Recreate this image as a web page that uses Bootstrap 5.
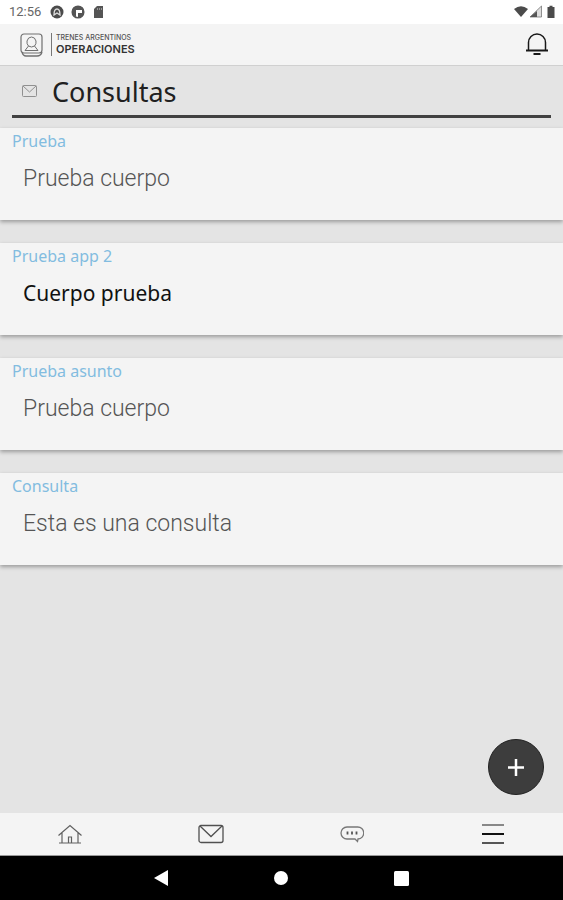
<!DOCTYPE html>
<html lang="es">
<head>
<meta charset="utf-8">
<meta name="viewport" content="width=device-width, initial-scale=1">
<title>Consultas</title>
<link href="https://cdn.jsdelivr.net/npm/bootstrap@5.3.0/dist/css/bootstrap.min.css" rel="stylesheet">
<style>
body { background: #e4e4e4; font-family: "Noto Sans", sans-serif; color: #1c1c1c; }
svg { display: block; }
.status-bar { height: 24px; padding: 0 7px 0 9px; background: #fff; color: #666; font: 13px/24px Roboto, sans-serif; }
.app-bar { height: 42px; padding: 0 12px 0 20px; background: #f4f4f4; border-bottom: 1px solid #d0d0d0; }
.brand { color: #333; gap: 7px; }
.brand-text { border-left: 1px solid #777; padding-left: 4px; font-family: Inter, sans-serif; font-weight: 600; }
.brand-top { font-size: 7px; line-height: 9px; font-weight: 500; color: #555; }
.brand-main { font-size: 11px; line-height: 14px; }
.page-title { margin: 0 12px 10px; padding-left: 10px; gap: 15px; height: 52px; border-bottom: 3px solid #414141; }
.page-title h1 { font-size: 27px; line-height: 48px; font-weight: 400; margin: 0; padding-top: 2px; color: #202020; }
.messages { gap: 23px; }
.message { height: 92px; padding: 2px 12px; background: #f4f4f4; color: #555; box-shadow: 0 2px 4px rgba(0,0,0,.32); }
.subject { font-size: 16px; line-height: 22px; font-weight: 400; color: #82bce0; margin: 0 0 12px; }
.preview { font-family: Roboto, sans-serif; font-weight: 300; font-size: 23px; line-height: 30px; margin: 0; padding-left: 11px; }
.unread .preview { font-family: "Noto Sans", sans-serif; font-weight: 400; font-size: 21px; line-height: 28px; color: #111; }
.add-btn { right: 19px; bottom: 18px; width: 56px; height: 56px; background: #3d3d3d; color: #fff; border: 1px solid #222; }
.tab-bar { height: 43px; background: #f4f4f4; border-bottom: 1px solid #999; }
.system-bar { height: 44px; gap: 106px; background: #000; }
</style>
<script defer src="https://cdn.jsdelivr.net/npm/bootstrap@5.3.0/dist/js/bootstrap.bundle.min.js"></script>
</head>
<body class="d-flex flex-column min-vh-100">
<div class="status-bar d-flex align-items-center justify-content-between">
  <div class="d-flex align-items-center">
    <span class="me-2">12:56</span>
    <svg width="56" height="14" viewBox="0 0 56 14"><circle cx="8" cy="7" r="6.500" fill="#4b4b4b"/><path d="M5 10q0-6 3-6t3 6L8 8z" fill="none" stroke="#ddd" stroke-width="1.300"/><circle cx="29" cy="7" r="5.800" fill="#fff" stroke="#555" stroke-width="1.500"/><path d="M29 1a6 6 0 0 0-5 9l3 2V5h6v3h-4v5a6 6 0 0 0 0-12" fill="#555"/><path d="M48 1h6v12h-9V4z" fill="#555"/><path d="M48.500 3v2m2-2v2m2-2v2" stroke="#aaa" stroke-width=".8"/></svg>
  </div>
  <svg width="42" height="14" viewBox="0 0 42 14"><path d="M0 4q7-5.500 14 0L7 12z" fill="#4b4b4b"/><path d="M27.500 1v11H16z" fill="#ddd" stroke="#777" stroke-width=".8"/><path d="M23 6v6h-7z" fill="#555"/><path d="M33.500 2h2V.8h3V2h2v11h-7z" fill="#4b4b4b"/></svg>
</div>
<header class="app-bar d-flex align-items-center justify-content-between">
  <a href="#" class="brand d-flex align-items-center text-decoration-none">
    <svg width="24" height="24" viewBox="0 0 24 24" fill="none" stroke="#707070"><rect x="1" y="1" width="21" height="19" rx="3" stroke-width="1.200"/><path d="M2 19q1 4 4 4h11q4 0 5-4" stroke-width="1.300"/><path d="M8.500 13Q6.500 11 7 8q1-4 4.500-4T16 8q.5 3-1.500 5M5 17.500l3.500-4.500q3 2 6 0l3.500 4.500M5 17.500h13"/></svg>
    <span class="brand-text"><span class="brand-top d-block">TRENES ARGENTINOS</span><span class="brand-main d-block">OPERACIONES</span></span>
  </a>
  <button type="button" class="btn p-0 border-0" aria-label="Notificaciones">
    <svg width="28" height="26" viewBox="0 0 28 26" fill="none" stroke="#181818"><path d="M5.500 18V10.500a8.500 8.500 0 0 1 17 0V18" stroke-width="1.500"/><path d="M3 18.500h22" stroke-width="2"/><path d="M10.500 22h7" stroke-width="2"/></svg>
  </button>
</header>
<main class="position-relative flex-grow-1">
  <div class="page-title d-flex align-items-center">
    <svg width="15" height="12" viewBox="0 0 15 12" fill="none" stroke="#909090"><rect x=".5" y=".5" width="14" height="11" rx="1"/><path d="m1 1 6.500 6L14 1"/></svg>
    <h1>Consultas</h1>
  </div>
  <div class="messages d-flex flex-column">
    <article class="message"><h2 class="subject">Prueba</h2><p class="preview">Prueba cuerpo</p></article>
    <article class="message unread"><h2 class="subject">Prueba app 2</h2><p class="preview">Cuerpo prueba</p></article>
    <article class="message"><h2 class="subject">Prueba asunto</h2><p class="preview">Prueba cuerpo</p></article>
    <article class="message"><h2 class="subject">Consulta</h2><p class="preview">Esta es una consulta</p></article>
  </div>
  <button type="button" class="add-btn rounded-circle position-absolute d-flex align-items-center justify-content-center p-0" aria-label="Nueva consulta">
    <svg width="18" height="18" viewBox="0 0 18 18"><path d="M9 1v17M1 9.500h16" stroke="#fff" stroke-width="2.500"/></svg>
  </button>
</main>
<nav class="tab-bar row row-cols-4 g-0 align-items-center" aria-label="Principal">
  <a href="#" class="col d-flex justify-content-center" aria-label="Inicio"><svg width="24" height="22" viewBox="0 0 24 22" fill="none" stroke="#606060" stroke-width="1.200"><path d="M.5 12.500 12 2.500l11.500 10M4 10v10m16-10v10M1 20h22M10.500 20v-6h3v6"/></svg></a>
  <a href="#" class="col d-flex justify-content-center" aria-label="Mensajes"><svg width="26" height="20" viewBox="0 0 26 20" fill="none" stroke="#505050" stroke-width="1.300"><rect x="1" y="1.500" width="24" height="17" rx="2"/><path d="m2 2 11 10.500L24 2"/></svg></a>
  <a href="#" class="col d-flex justify-content-center" aria-label="Chat"><svg width="24" height="18" viewBox="0 0 24 18" fill="none" stroke="#777" stroke-width="1.300"><path d="M7 2h10.500a6 6 0 0 1 .5 12l-.5 2.500-2.500-2.500H7A6 6 0 0 1 7 2z"/><path d="M7.500 6.500v3m4.500-3v3m4.500-3v3" stroke="#555" stroke-width="1.800"/></svg></a>
  <a href="#" class="col d-flex justify-content-center" aria-label="Menú"><svg width="24" height="22" viewBox="0 0 24 22" fill="none" stroke-width="2"><path d="M1 2h22" stroke="#888"/><path d="M1 11h22" stroke="#111"/><path d="M1 20h22" stroke="#555"/></svg></a>
</nav>
<div class="system-bar d-flex align-items-center justify-content-center">
  <button type="button" class="btn p-0 border-0" aria-label="Atrás"><svg width="14" height="16" viewBox="0 0 14 16"><path d="M14 0v16L0 8z" fill="#fff"/></svg></button>
  <button type="button" class="btn p-0 border-0" aria-label="Inicio"><svg width="14" height="14" viewBox="0 0 14 14"><circle cx="7" cy="7" r="7" fill="#fff"/></svg></button>
  <button type="button" class="btn p-0 border-0" aria-label="Recientes"><svg width="15" height="15" viewBox="0 0 15 15"><rect width="15" height="15" rx="1.500" fill="#fff"/></svg></button>
</div>
</body>
</html>
